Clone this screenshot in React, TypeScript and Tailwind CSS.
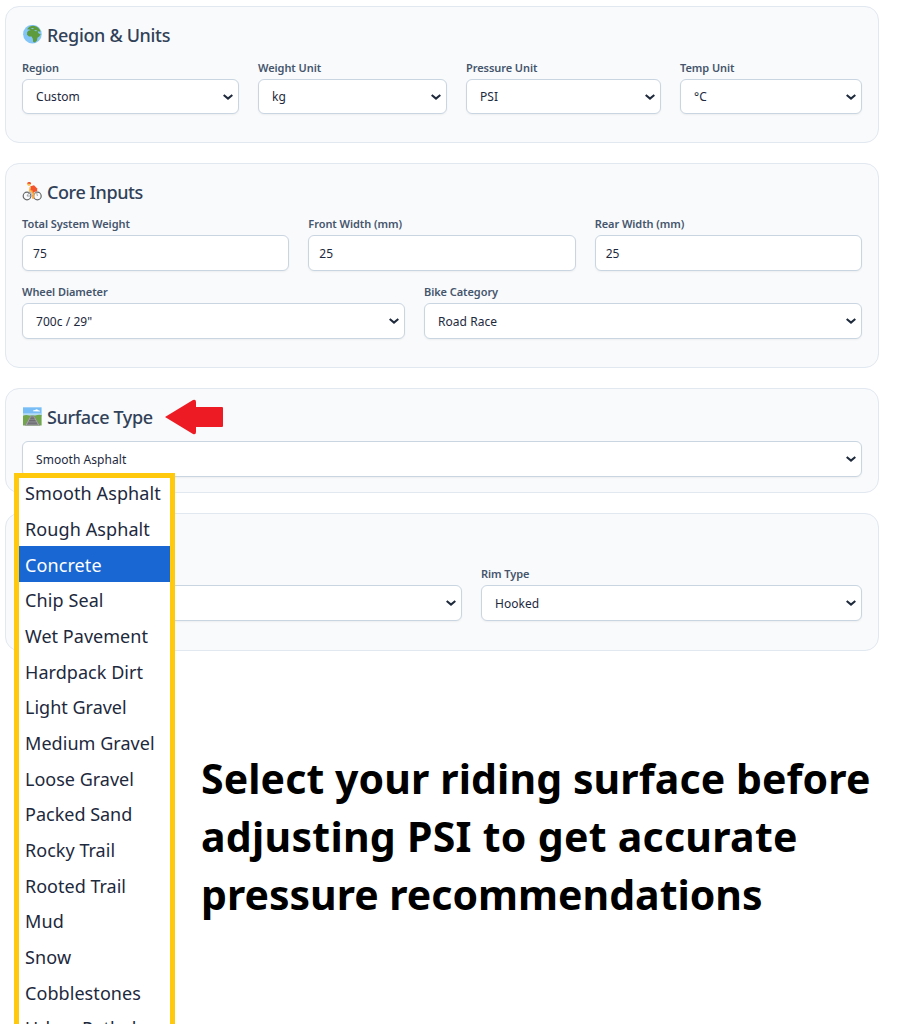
import React from "react";

interface FieldProps {
  label?: string;
  value: string;
  kind?: "select" | "input";
  className?: string;
  boxClassName?: string;
}

interface CardProps {
  icon?: React.ReactNode;
  title?: string;
  titleClassName?: string;
  marker?: React.ReactNode;
  className?: string;
  children: React.ReactNode;
}

const surfaces = [
  { name: "Smooth Asphalt", spacing: "tracking-[0.11px]" },
  { name: "Rough Asphalt", spacing: "tracking-[0.1px]" },
  { name: "Concrete", spacing: "tracking-[0.1px]" },
  { name: "Chip Seal", spacing: "tracking-[0.1px]" },
  { name: "Wet Pavement", spacing: "tracking-[0.03px]" },
  { name: "Hardpack Dirt", spacing: "tracking-[0.05px]" },
  { name: "Light Gravel", spacing: "tracking-normal" },
  { name: "Medium Gravel", spacing: "tracking-[0.05px]" },
  { name: "Loose Gravel", spacing: "tracking-normal" },
  { name: "Packed Sand", spacing: "tracking-normal" },
  { name: "Rocky Trail", spacing: "tracking-[0.03px]" },
  { name: "Rooted Trail", spacing: "tracking-normal" },
  { name: "Mud", spacing: "tracking-[0.2px]" },
  { name: "Snow", spacing: "tracking-[0.15px]" },
  { name: "Cobblestones", spacing: "tracking-[0.07px]" },
  { name: "Urban Potholes", spacing: "tracking-[-0.1px]" },
];

const GlobeIcon = () => (
  <svg viewBox="0 0 20 20" className="h-5 w-5">
    <circle cx="10.4" cy="9.2" r="9.3" fill="#83c5f7" />
    <path
      d="M5 4.2Q7 1.2 10.4.8q5 0 7.4 4l.6 2.2-1.8-.8-1 .6 1.4 2 1.8.2-1.6 2.6-1.8 1.2-.4 2.6-2.2 2.2-1.6-.6-.4-3.2-1.2-2.2-2.6-.2-2-1.6.2-2.8 1.6-1.6 1.8-.2-1.2-.8z"
      fill="#5d9b3c"
    />
    <path d="m8.6 3.6 1.8-.6 1.6.4-1 .8zM12 5l2.4.2 1 .8-1.8.2z" fill="#83c5f7" />
  </svg>
);

const CyclistIcon = () => (
  <svg viewBox="0 0 20 20" className="h-5 w-5" fill="none">
    <circle cx="5" cy="14" r="3.8" stroke="#666" strokeWidth="1.2" />
    <circle cx="15.4" cy="14" r="3.8" stroke="#666" strokeWidth="1.2" />
    <path
      d="m5 14 2.6-4.4 3.4 4.4 3.4-4.6 1 4.6M11 14H5"
      stroke="#9b9b9b"
      strokeWidth=".9"
    />
    <path d="m9 8.6 2.6 3-.6 5" stroke="#f7a53b" strokeWidth="2" />
    <path d="m8.4 4.2 3.6-1 3.2 3.4v2.4l-4 1.4-3.4-2z" fill="#f4542b" />
    <path d="m8.2 5-.6 3.6 3 .8" stroke="#fbc250" strokeWidth="1.5" />
    <circle cx="7" cy="2.2" r="1.7" fill="#fbc250" />
    <path d="M4.8 1.4Q6.2-.8 8.8.4l.4 1.6z" fill="#ec4a24" />
  </svg>
);

const RoadIcon = () => (
  <svg viewBox="0 0 20 20" className="h-5 w-5">
    <path d="M1 .3h18.6v9H1z" fill="#78bdf6" />
    <path d="M1 6.3h18.6v3H1z" fill="#b7dcf6" />
    <path d="M1 8.8Q4 7.4 7.4 8.6h6q3-1.4 6.2-.6v10.6H1z" fill="#71a64b" />
    <path d="M8.8 8.8h3l6.4 9.8H2.6z" fill="#85858b" />
    <path
      d="m8.8 9.4-5 9.2M11.8 9.4l5.2 9.2"
      stroke="#b4adad"
      strokeWidth=".8"
    />
    <path
      d="M8.4 11.2h4M7.2 13.6h6.2M5.8 16.2h9.2"
      stroke="#66666c"
      strokeWidth=".9"
    />
    <path d="M11 4.2q.4-1.4 2-1 1.6-1.8 3.2 0 1.8 0 1.8 1.4z" fill="#fff" />
  </svg>
);

const Chevron = () => (
  <svg viewBox="0 0 10 6" className="h-1.5 w-2.5 shrink-0" fill="none">
    <path d="m.7.9 4.3 3.7L9.3.9" stroke="#1e293b" strokeWidth="2" />
  </svg>
);

const Arrow = () => (
  <svg viewBox="0 0 58 36" className="ml-[7px] h-9 w-[58px] shrink-0">
    <path
      d="M0 18 28 1q3-1 3 2v5h26q1 0 1 1v18q0 1-1 1H31v5q0 3-3 2z"
      fill="#ed1c24"
    />
  </svg>
);

const Field = ({
  label,
  value,
  kind = "select",
  className = "",
  boxClassName = "h-9",
}: FieldProps) => (
  <div className={`flex flex-col gap-[3px] ${className}`}>
    {label && (
      <span className="h-4 whitespace-nowrap text-[11px] font-semibold leading-4 tracking-[-0.07px] text-slate-600">
        {label}
      </span>
    )}
    <div
      className={`flex items-center justify-between rounded-md border border-slate-300 bg-white pr-[5px] text-slate-800 shadow-xs ${
        kind === "select" ? "pl-[13px]" : "pl-2.5"
      } ${boxClassName}`}
    >
      <span className="whitespace-nowrap pt-px text-[12px] leading-4 tracking-[0.05px]">
        {value}
      </span>
      {kind === "select" && <Chevron />}
    </div>
  </div>
);

const Card = ({
  icon,
  title,
  titleClassName = "",
  marker,
  className = "",
  children,
}: CardProps) => (
  <section
    className={`rounded-[14px] border border-slate-200 bg-slate-50 px-4 pt-4 ${className}`}
  >
    <div className="flex h-6 items-center gap-[5px]">
      {icon}
      {title && (
        <h2
          className={`whitespace-nowrap text-[18px] font-medium leading-6 text-slate-700 ${titleClassName}`}
        >
          {title}
        </h2>
      )}
      {marker}
    </div>
    {children}
  </section>
);

const App = () => {
  return (
    <div className="relative h-[1024px] w-[904px] overflow-hidden bg-white pl-[5px] pt-1.5 font-['Noto_Sans',sans-serif]">
      <main className="flex w-[874px] flex-col gap-5">
        <Card
          icon={<GlobeIcon />}
          title="Region & Units"
          titleClassName="tracking-[-0.33px]"
          className="h-[137px]"
        >
          <div className="mt-[13px] grid grid-cols-[217px_189px_195px_182px] gap-[19px]">
            <Field label="Region" value="Custom" boxClassName="h-[35px]" />
            <Field label="Weight Unit" value="kg" boxClassName="h-[35px]" />
            <Field label="Pressure Unit" value="PSI" boxClassName="h-[35px]" />
            <Field label="Temp Unit" value="°C" boxClassName="h-[35px]" />
          </div>
        </Card>

        <Card
          icon={<CyclistIcon />}
          title="Core Inputs"
          titleClassName="tracking-[-0.42px]"
          className="h-[205px]"
        >
          <div className="mt-3 grid grid-cols-3 gap-[19px]">
            <Field label="Total System Weight" value="75" kind="input" />
            <Field label="Front Width (mm)" value="25" kind="input" />
            <Field label="Rear Width (mm)" value="25" kind="input" />
          </div>
          <div className="mt-[13px] grid grid-cols-[383px_438px] gap-[19px]">
            <Field label="Wheel Diameter" value={'700c / 29"'} />
            <Field label="Bike Category" value="Road Race" />
          </div>
        </Card>

        <Card
          icon={<RoadIcon />}
          title="Surface Type"
          titleClassName="tracking-[-0.37px]"
          marker={<Arrow />}
          className="h-[105px]"
        >
          <Field className="mt-3" value="Smooth Asphalt" />
        </Card>

        <Card className="h-[138px]">
          <div className="mt-3 grid grid-cols-[440px_381px] gap-[19px]">
            <Field className="justify-end" value="" />
            <Field label="Rim Type" value="Hooked" />
          </div>
        </Card>
      </main>

      <p className="ml-[196px] mt-[98px] flex flex-col whitespace-nowrap text-[41px] font-bold leading-[58px] text-black">
        <span className="tracking-[0.1px]">
          Select your riding surface before
        </span>
        <span className="tracking-[0.28px]">adjusting PSI to get accurate</span>
        <span>pressure recommendations</span>
      </p>

      {/* Open surface list, runs past the bottom edge */}
      <div className="absolute left-3.5 top-[473px] h-[600px] w-[161px] overflow-hidden border-5 border-[#ffc90e] bg-white">
        <ul className="-mt-[3px] flex flex-col">
          {surfaces.map(({ name, spacing }) => (
            <li
              key={name}
              className={`flex h-[35.67px] shrink-0 items-center whitespace-nowrap pl-1.5 pt-0.5 text-[18px] ${spacing} ${
                name === "Concrete"
                  ? "bg-[#1967d2] text-white"
                  : "text-slate-800"
              }`}
            >
              {name}
            </li>
          ))}
        </ul>
      </div>
    </div>
  );
};

export default App;
